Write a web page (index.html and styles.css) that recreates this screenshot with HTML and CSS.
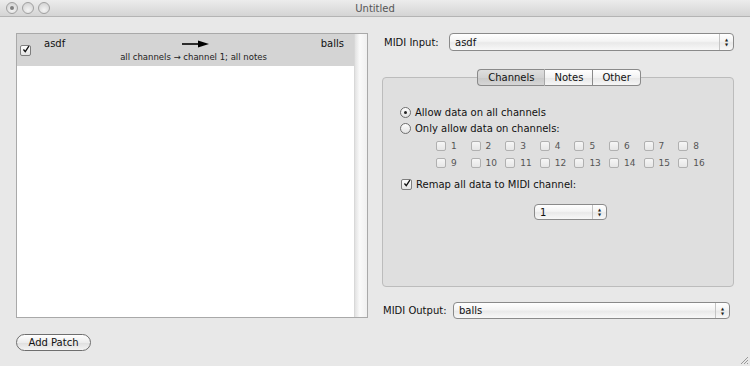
FILE: index.html
```html
<!DOCTYPE html>
<html lang="en">
<head>
    <meta charset="UTF-8">
    <title>Untitled</title>
    <link rel="stylesheet" href="styles.css">
</head>
<body>
    <div class="window">
        <div class="titlebar">
            <div class="lights">
                <span class="light dot"></span>
                <span class="light"></span>
                <span class="light"></span>
            </div>
            <div class="title">Untitled</div>
        </div>

        <div class="content">
            <div class="left">
                <div class="patch-list">
                    <div class="rows">
                        <div class="patch-row">
                            <span class="check checked row-check">
                                <svg viewBox="0 0 11 11" width="11" height="11"><path d="M2 5.5 L4.5 8.5 L9.5 1" fill="none" stroke="#111" stroke-width="1.8"/></svg>
                            </span>
                            <div class="patch-top">
                                <span class="patch-in">asdf</span>
                                <svg class="patch-arrow" width="28" height="8" viewBox="0 0 28 8"><path d="M0 4 H18" stroke="#000" stroke-width="1.6"/><path d="M16 0.5 L27 4 L16 7.5 Z" fill="#000"/></svg>
                                <span class="patch-out">balls</span>
                            </div>
                            <div class="patch-desc">all channels → channel 1; all notes</div>
                        </div>
                    </div>
                    <div class="scroller"></div>
                </div>
                <button class="push">Add Patch</button>
            </div>

            <div class="right">
                <div class="field-row">
                    <label class="field-label in-label">MIDI Input:</label>
                    <div class="popup wide">
                        <span>asdf</span>
                        <span class="popup-arrows">▲<br>▼</span>
                    </div>
                </div>

                <div class="tabview">
                    <div class="tabs">
                        <span class="tab active">Channels</span>
                        <span class="tab">Notes</span>
                        <span class="tab">Other</span>
                    </div>
                    <div class="tabbox">
                        <div class="radio-row">
                            <span class="radio on"></span>Allow data on all channels
                        </div>
                        <div class="radio-row">
                            <span class="radio"></span>Only allow data on channels:
                        </div>

                        <div class="channel-grid">
                            <span class="chan"><span class="check small"></span>1</span>
                            <span class="chan"><span class="check small"></span>2</span>
                            <span class="chan"><span class="check small"></span>3</span>
                            <span class="chan"><span class="check small"></span>4</span>
                            <span class="chan"><span class="check small"></span>5</span>
                            <span class="chan"><span class="check small"></span>6</span>
                            <span class="chan"><span class="check small"></span>7</span>
                            <span class="chan"><span class="check small"></span>8</span>
                            <span class="chan"><span class="check small"></span>9</span>
                            <span class="chan"><span class="check small"></span>10</span>
                            <span class="chan"><span class="check small"></span>11</span>
                            <span class="chan"><span class="check small"></span>12</span>
                            <span class="chan"><span class="check small"></span>13</span>
                            <span class="chan"><span class="check small"></span>14</span>
                            <span class="chan"><span class="check small"></span>15</span>
                            <span class="chan"><span class="check small"></span>16</span>
                        </div>

                        <div class="remap-row">
                            <span class="check checked">
                                <svg viewBox="0 0 11 11" width="11" height="11"><path d="M2 5.5 L4.5 8.5 L9.5 1" fill="none" stroke="#111" stroke-width="1.8"/></svg>
                            </span>Remap all data to MIDI channel:
                        </div>
                        <div class="popup small-popup">
                            <span>1</span>
                            <span class="popup-arrows">▲<br>▼</span>
                        </div>
                    </div>
                </div>

                <div class="field-row out-row">
                    <label class="field-label out-label">MIDI Output:</label>
                    <div class="popup wide">
                        <span>balls</span>
                        <span class="popup-arrows">▲<br>▼</span>
                    </div>
                </div>
            </div>
        </div>

        <svg class="grip" width="10" height="10" viewBox="0 0 10 10">
            <path d="M9 2 L2 9 M9 5 L5 9 M9 8 L8 9" stroke="#999" stroke-width="1"/>
        </svg>
    </div>
</body>
</html>
```

FILE: styles.css
```css
body {
    margin: 0;
    font-family: "DejaVu Sans", "Liberation Sans", sans-serif;
    font-size: 10px;
    color: #111;
    background-color: #e8e8e8;
}

.window {
    position: relative;
    width: 750px;
    height: 366px;
    overflow: hidden;
    background-color: #e8e8e8;
}

/* title bar */
.titlebar {
    height: 16px;
    border-bottom: 1px solid #b4b4b4;
    background: linear-gradient(#ececec, #d4d4d4);
    display: flex;
    align-items: center;
    position: relative;
}

.lights {
    display: flex;
    gap: 4px;
    padding-left: 6px;
}

.light {
    width: 12px;
    height: 12px;
    border-radius: 50%;
    border: 1px solid #a0a0a0;
    background: radial-gradient(circle at 50% 70%, #f4f4f4, #cdcdcd);
    box-sizing: border-box;
    display: flex;
    align-items: center;
    justify-content: center;
}

.light.dot::after {
    content: "";
    width: 4px;
    height: 4px;
    border-radius: 50%;
    background-color: #808080;
}

.title {
    flex: 1;
    text-align: center;
    color: #555;
    margin-right: 50px;
}

/* main area */
.content {
    display: flex;
    gap: 14px;
    padding: 16px 16px 0 16px;
}

.left {
    width: 352px;
}

.patch-list {
    height: 285px;
    box-sizing: border-box;
    border: 1px solid #a9a9a9;
    background-color: #fff;
    display: flex;
}

.rows {
    flex: 1;
}

.scroller {
    width: 12px;
    background: linear-gradient(to right, #e2e2e2, #fafafa 40%, #f0f0f0);
    border-left: 1px solid #d8d8d8;
}

.patch-row {
    position: relative;
    height: 32px;
    background-color: #d4d4d4;
    padding-left: 27px;
    box-sizing: border-box;
}

.row-check {
    position: absolute;
    left: 3px;
    top: 11px;
}

.patch-top {
    display: flex;
    align-items: center;
    height: 17px;
    padding-top: 1px;
    padding-right: 10px;
}

.patch-in {
    width: 138px;
}

.patch-arrow {
    margin-top: 1px;
}

.patch-out {
    margin-left: auto;
}

.patch-desc {
    font-size: 8.5px;
    text-align: center;
    padding-right: 11px;
    color: #222;
}

/* controls */
.check {
    display: inline-flex;
    align-items: center;
    justify-content: center;
    width: 11px;
    height: 11px;
    box-sizing: border-box;
    border: 1px solid #7e7e7e;
    border-radius: 2px;
    background: linear-gradient(#fdfdfd, #e4e4e4);
    vertical-align: middle;
}

.check svg {
    margin-top: -2px;
    margin-left: 1px;
}

.check.small {
    width: 10px;
    height: 10px;
    border-color: #b0b0b0;
    background: linear-gradient(#f6f6f6, #e6e6e6);
    margin-right: 5px;
}

.radio {
    display: inline-flex;
    align-items: center;
    justify-content: center;
    width: 11px;
    height: 11px;
    box-sizing: border-box;
    border: 1px solid #6f6f6f;
    border-radius: 50%;
    background: linear-gradient(#fdfdfd, #e2e2e2);
    margin-right: 4px;
}

.radio.on::after {
    content: "";
    width: 3px;
    height: 3px;
    border-radius: 50%;
    background-color: #222;
}

.push {
    margin-top: 16px;
    height: 17px;
    padding: 0 10px;
    font-family: inherit;
    font-size: 10px;
    color: #111;
    border: 1px solid #6e6e6e;
    border-radius: 9px;
    background: linear-gradient(#ffffff, #ececec 50%, #dedede 51%, #f4f4f4);
    width: 75px;
}

.right {
    flex: 1;
}

.field-row {
    display: flex;
    align-items: center;
    height: 18px;
}

.field-label {
    box-sizing: border-box;
}

.in-label {
    width: 67px;
    padding-left: 2px;
}

.out-label {
    width: 71px;
    padding-left: 1px;
}

.popup {
    display: flex;
    align-items: center;
    box-sizing: border-box;
    border: 1px solid #8a8a8a;
    border-radius: 4px;
    background: linear-gradient(#ffffff, #f4f4f4 45%, #e9e9e9 55%, #f8f8f8);
    padding-left: 5px;
    position: relative;
}

.popup.wide {
    flex: 1;
    height: 18px;
}

.out-row .popup.wide {
    margin-right: 4px;
    height: 17px;
}

.popup-arrows {
    margin-left: auto;
    width: 13px;
    align-self: stretch;
    border-left: 1px solid #c4c4c4;
    font-size: 4px;
    line-height: 5px;
    text-align: center;
    display: flex;
    flex-direction: column;
    justify-content: center;
    color: #222;
}

.tabview {
    margin-top: 18px;
}

.tabs {
    display: flex;
    justify-content: center;
    position: relative;
    z-index: 1;
    margin-left: 2px;
}

.tab {
    height: 17px;
    box-sizing: border-box;
    border: 1px solid #8a8a8a;
    border-left: none;
    background: linear-gradient(#ffffff, #f2f2f2 50%, #e6e6e6 51%, #f6f6f6);
    padding: 0 9px;
    display: flex;
    align-items: center;
}

.tab:first-child {
    border-left: 1px solid #8a8a8a;
    border-radius: 4px 0 0 4px;
    padding: 0 10px;
}

.tab:last-child {
    border-radius: 0 4px 4px 0;
}

.tab.active {
    background: linear-gradient(#dedede, #d2d2d2 50%, #c8c8c8 51%, #d6d6d6);
    border-right-color: #a8a8a8;
}

.tabbox {
    margin-top: -9px;
    height: 210px;
    width: 352px;
    box-sizing: border-box;
    border: 1px solid #bcbcbc;
    border-radius: 4px;
    background-color: #dfdfdf;
    padding: 26px 0 0 17px;
}

.radio-row {
    display: flex;
    align-items: center;
    height: 16px;
}

.channel-grid {
    display: grid;
    grid-template-columns: repeat(8, 34.6px);
    grid-auto-rows: 17px;
    margin: 1px 0 0 36px;
}

.chan {
    display: flex;
    align-items: center;
    font-size: 9px;
    color: #555;
}

.remap-row {
    display: flex;
    align-items: center;
    height: 13px;
    margin: 7px 0 0 1px;
}

.remap-row .check {
    margin-right: 4px;
}

.popup.small-popup {
    width: 73px;
    height: 16px;
    margin: 13px 0 0 134px;
}

.out-row {
    margin-top: 15px;
    height: 17px;
}

.grip {
    position: absolute;
    right: 1px;
    bottom: 1px;
}
```
